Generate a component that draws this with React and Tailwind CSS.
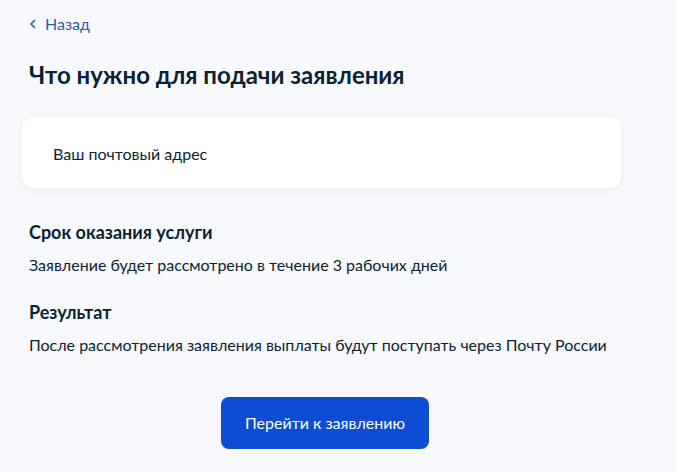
import React from "react";

export default function App() {
  return (
    <div
      className="min-h-screen w-full bg-[#f8f9fc] text-[#0b1f33]"
      style={{ fontFamily: "Lato, 'Noto Sans', sans-serif" }}
    >
      <div className="w-[592px] ml-[29px] pt-[14px] pb-[23px] flex flex-col">
        {/* back link */}
        <a href="#" className="flex items-center h-[20px] text-[16px] text-[#2f5aa8]">
          <svg width="8" height="10" viewBox="0 0 8 10" className="mr-[8px]" fill="none">
            <path d="M5.5 1.5 L2 5 L5.5 8.5" stroke="#2f5aa8" strokeWidth="1.7" strokeLinecap="round" strokeLinejoin="round" />
          </svg>
          Назад
        </a>

        <h1 className="mt-[27px] text-[24px] leading-[28px] font-bold">
          Что нужно для подачи заявления
        </h1>

        {/* card */}
        <div className="mt-[28px] -ml-[7px] h-[71px] bg-white rounded-[12px] shadow-[0_2px_10px_rgba(11,31,51,0.06)] flex items-center pl-[31px] pt-[3px]">
          <span className="text-[16px] leading-[20px]">Ваш почтовый адрес</span>
        </div>

        <h2 className="mt-[33px] text-[18px] leading-[22px] font-bold">Срок оказания услуги</h2>
        <p className="mt-[12px] text-[16px] leading-[20px]">
          Заявление будет рассмотрено в течение 3 рабочих дней
        </p>

        <h2 className="mt-[26px] text-[18px] leading-[22px] font-bold">Результат</h2>
        <p className="mt-[12px] text-[16px] leading-[20px]">
          После рассмотрения заявления выплаты будут поступать через Почту России
        </p>

        <div className="mt-[42px] flex justify-center">
          <button className="w-[208px] h-[52px] rounded-[8px] bg-[#0d4cd3] text-white text-[16px]">
            Перейти к заявлению
          </button>
        </div>
      </div>
    </div>
  );
}
